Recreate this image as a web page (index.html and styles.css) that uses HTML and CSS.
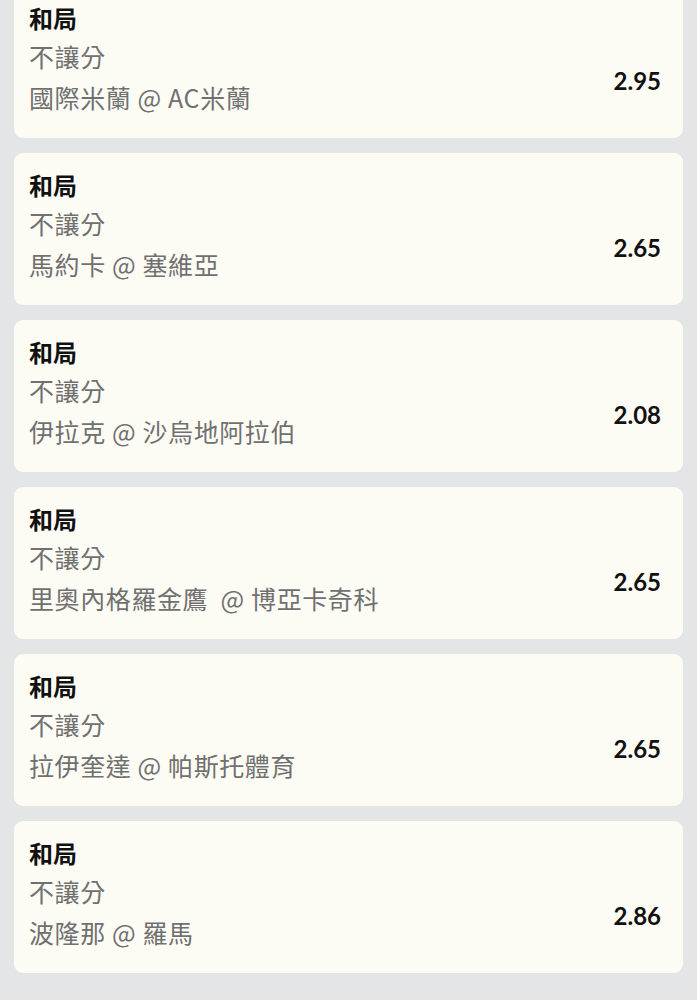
FILE: index.html
```html
<!DOCTYPE html>
<html lang="zh-Hant">
<head>
<meta charset="utf-8">
<link rel="stylesheet" href="styles.css">
</head>
<body>
<div class="list">
  <div class="card">
    <div class="info">
      <div class="title">和局</div>
      <div class="sub">不讓分</div>
      <div class="match">國際米蘭 @ AC米蘭</div>
    </div>
    <div class="odds">2.95</div>
  </div>
  <div class="card">
    <div class="info">
      <div class="title">和局</div>
      <div class="sub">不讓分</div>
      <div class="match">馬約卡 @ 塞維亞</div>
    </div>
    <div class="odds">2.65</div>
  </div>
  <div class="card">
    <div class="info">
      <div class="title">和局</div>
      <div class="sub">不讓分</div>
      <div class="match">伊拉克 @ 沙烏地阿拉伯</div>
    </div>
    <div class="odds">2.08</div>
  </div>
  <div class="card">
    <div class="info">
      <div class="title">和局</div>
      <div class="sub">不讓分</div>
      <div class="match">里奧內格羅金鷹&nbsp; @ 博亞卡奇科</div>
    </div>
    <div class="odds">2.65</div>
  </div>
  <div class="card">
    <div class="info">
      <div class="title">和局</div>
      <div class="sub">不讓分</div>
      <div class="match">拉伊奎達 @ 帕斯托體育</div>
    </div>
    <div class="odds">2.65</div>
  </div>
  <div class="card">
    <div class="info">
      <div class="title">和局</div>
      <div class="sub">不讓分</div>
      <div class="match">波隆那 @ 羅馬</div>
    </div>
    <div class="odds">2.86</div>
  </div>
</div>
</body>
</html>
```

FILE: styles.css
```css
html, body {
  margin: 0;
  padding: 0;
  background: #e4e5e7;
}
body {
  font-family: "Noto Sans CJK TC", sans-serif;
  overflow: hidden;
  height: 1000px;
}
.list {
  display: flex;
  flex-direction: column;
  gap: 15px;
  padding: 0 14px;
  margin-top: -14px;
}
.card {
  background: #fdfcf4;
  border-radius: 9px;
  display: flex;
  justify-content: space-between;
  padding: 13px 22px 21px 15px;
  height: 152px;
  box-sizing: border-box;
}
.info {
  display: flex;
  flex-direction: column;
}
.title {
  font-size: 24px;
  line-height: 38px;
  font-weight: 700;
  color: #111;
}
.sub {
  font-size: 25px;
  line-height: 38px;
  font-weight: 400;
  letter-spacing: 0.6px;
  color: #707070;
}
.match {
  font-size: 25px;
  line-height: 38px;
  margin-top: 3px;
  font-weight: 400;
  letter-spacing: 0.6px;
  color: #707070;
}
.odds {
  align-self: flex-end;
  margin-bottom: 21px;
  font-family: Lato, sans-serif;
  font-size: 24px;
  line-height: 30px;
  font-weight: 700;
  color: #111;
}
```
